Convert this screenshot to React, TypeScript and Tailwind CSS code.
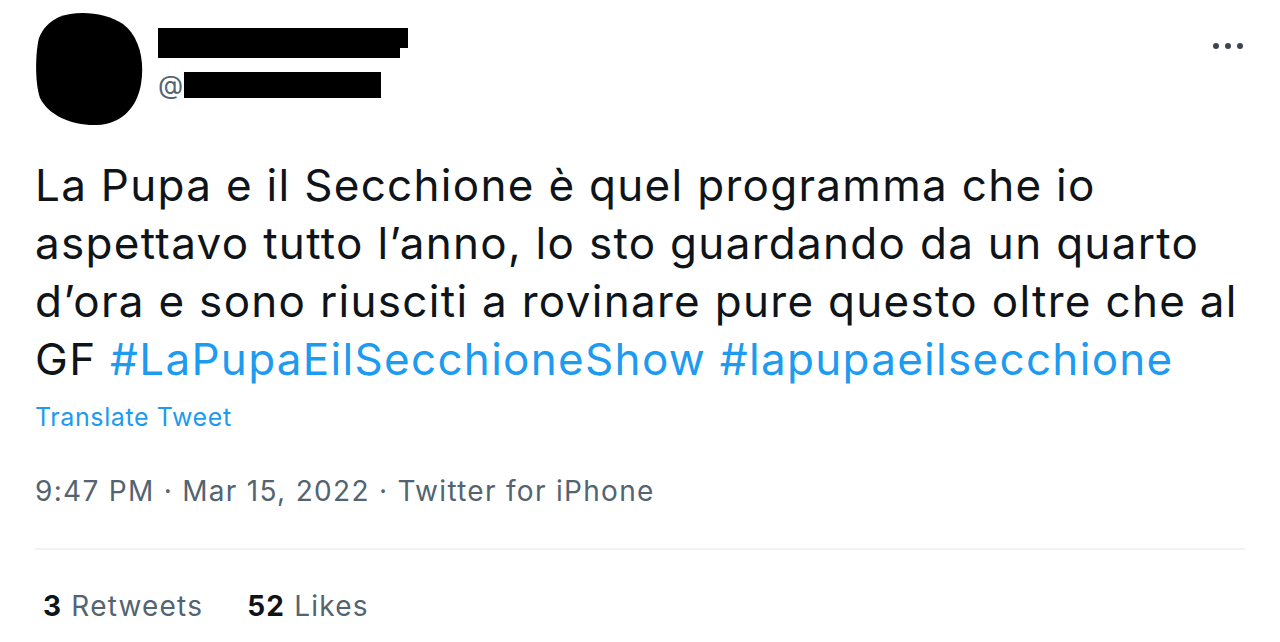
import React from "react";

export default function App() {
  return (
    <div className="w-[1280px] h-[642px] bg-white overflow-hidden relative" style={{ fontFamily: 'Inter, "Liberation Sans", Arial, sans-serif' }}>
      <div className="px-[35px]">
        <div className="flex items-start pt-[12px] relative">
          <svg width="110" height="115" viewBox="0 0 110 115" className="shrink-0">
            <path d="M24 5 C42 -2 70 0 88 12 C104 24 110 48 106 72 C102 96 86 112 62 113 C38 114 14 104 5 86 C0 72 0 42 4 26 C8 16 14 10 24 5 Z" fill="#000" />
          </svg>
          <div className="ml-[13px] pt-[16px] flex flex-col">
            <div className="flex flex-col">
              <div className="h-[20px] w-[250px] bg-black" />
              <div className="h-[10px] w-[242px] bg-black" />
            </div>
            <div className="flex items-center mt-[14px]">
              <span className="text-[26px] leading-none text-[#536471]">@</span>
              <div className="h-[26px] w-[197px] bg-black ml-[1px]" />
            </div>
          </div>
          <div className="ml-auto mt-[31px] mr-[2px] flex gap-[6px]">
            <span className="w-[6px] h-[6px] rounded-full bg-[#3b4550]" />
            <span className="w-[6px] h-[6px] rounded-full bg-[#3b4550]" />
            <span className="w-[6px] h-[6px] rounded-full bg-[#3b4550]" />
          </div>
        </div>

        <div className="mt-[29px] text-[44px] leading-[58px] tracking-[1.3px] text-[#0f1419] whitespace-nowrap">
          La Pupa e il Secchione è quel programma che io<br />
          aspettavo tutto l’anno, lo sto guardando da un quarto<br />
          d’ora e sono riusciti a rovinare pure questo oltre che al<br />
          GF <span className="text-[#1d9bf0]">#LaPupaEilSecchioneShow</span> <span className="text-[#1d9bf0]">#lapupaeilsecchione</span>
        </div>

        <div className="mt-[13px] text-[25px] leading-[32px] tracking-[0.6px] text-[#1d9bf0]">Translate Tweet</div>

        <div className="mt-[40px] text-[28px] leading-[36px] tracking-[1.3px] text-[#536471]">
          9:47 PM · Mar 15, 2022 · Twitter for iPhone
        </div>

        <div className="mt-[39px] h-[2px] bg-[#eff3f4]" />

        <div className="mt-[38px] flex text-[28px] leading-[36px] tracking-[1.2px] pl-[8px]">
          <span><span className="font-bold text-[#0f1419]">3</span> <span className="text-[#536471]">Retweets</span></span>
          <span className="ml-[44px]"><span className="font-bold text-[#0f1419]">52</span> <span className="text-[#536471]">Likes</span></span>
        </div>
      </div>
    </div>
  );
}
